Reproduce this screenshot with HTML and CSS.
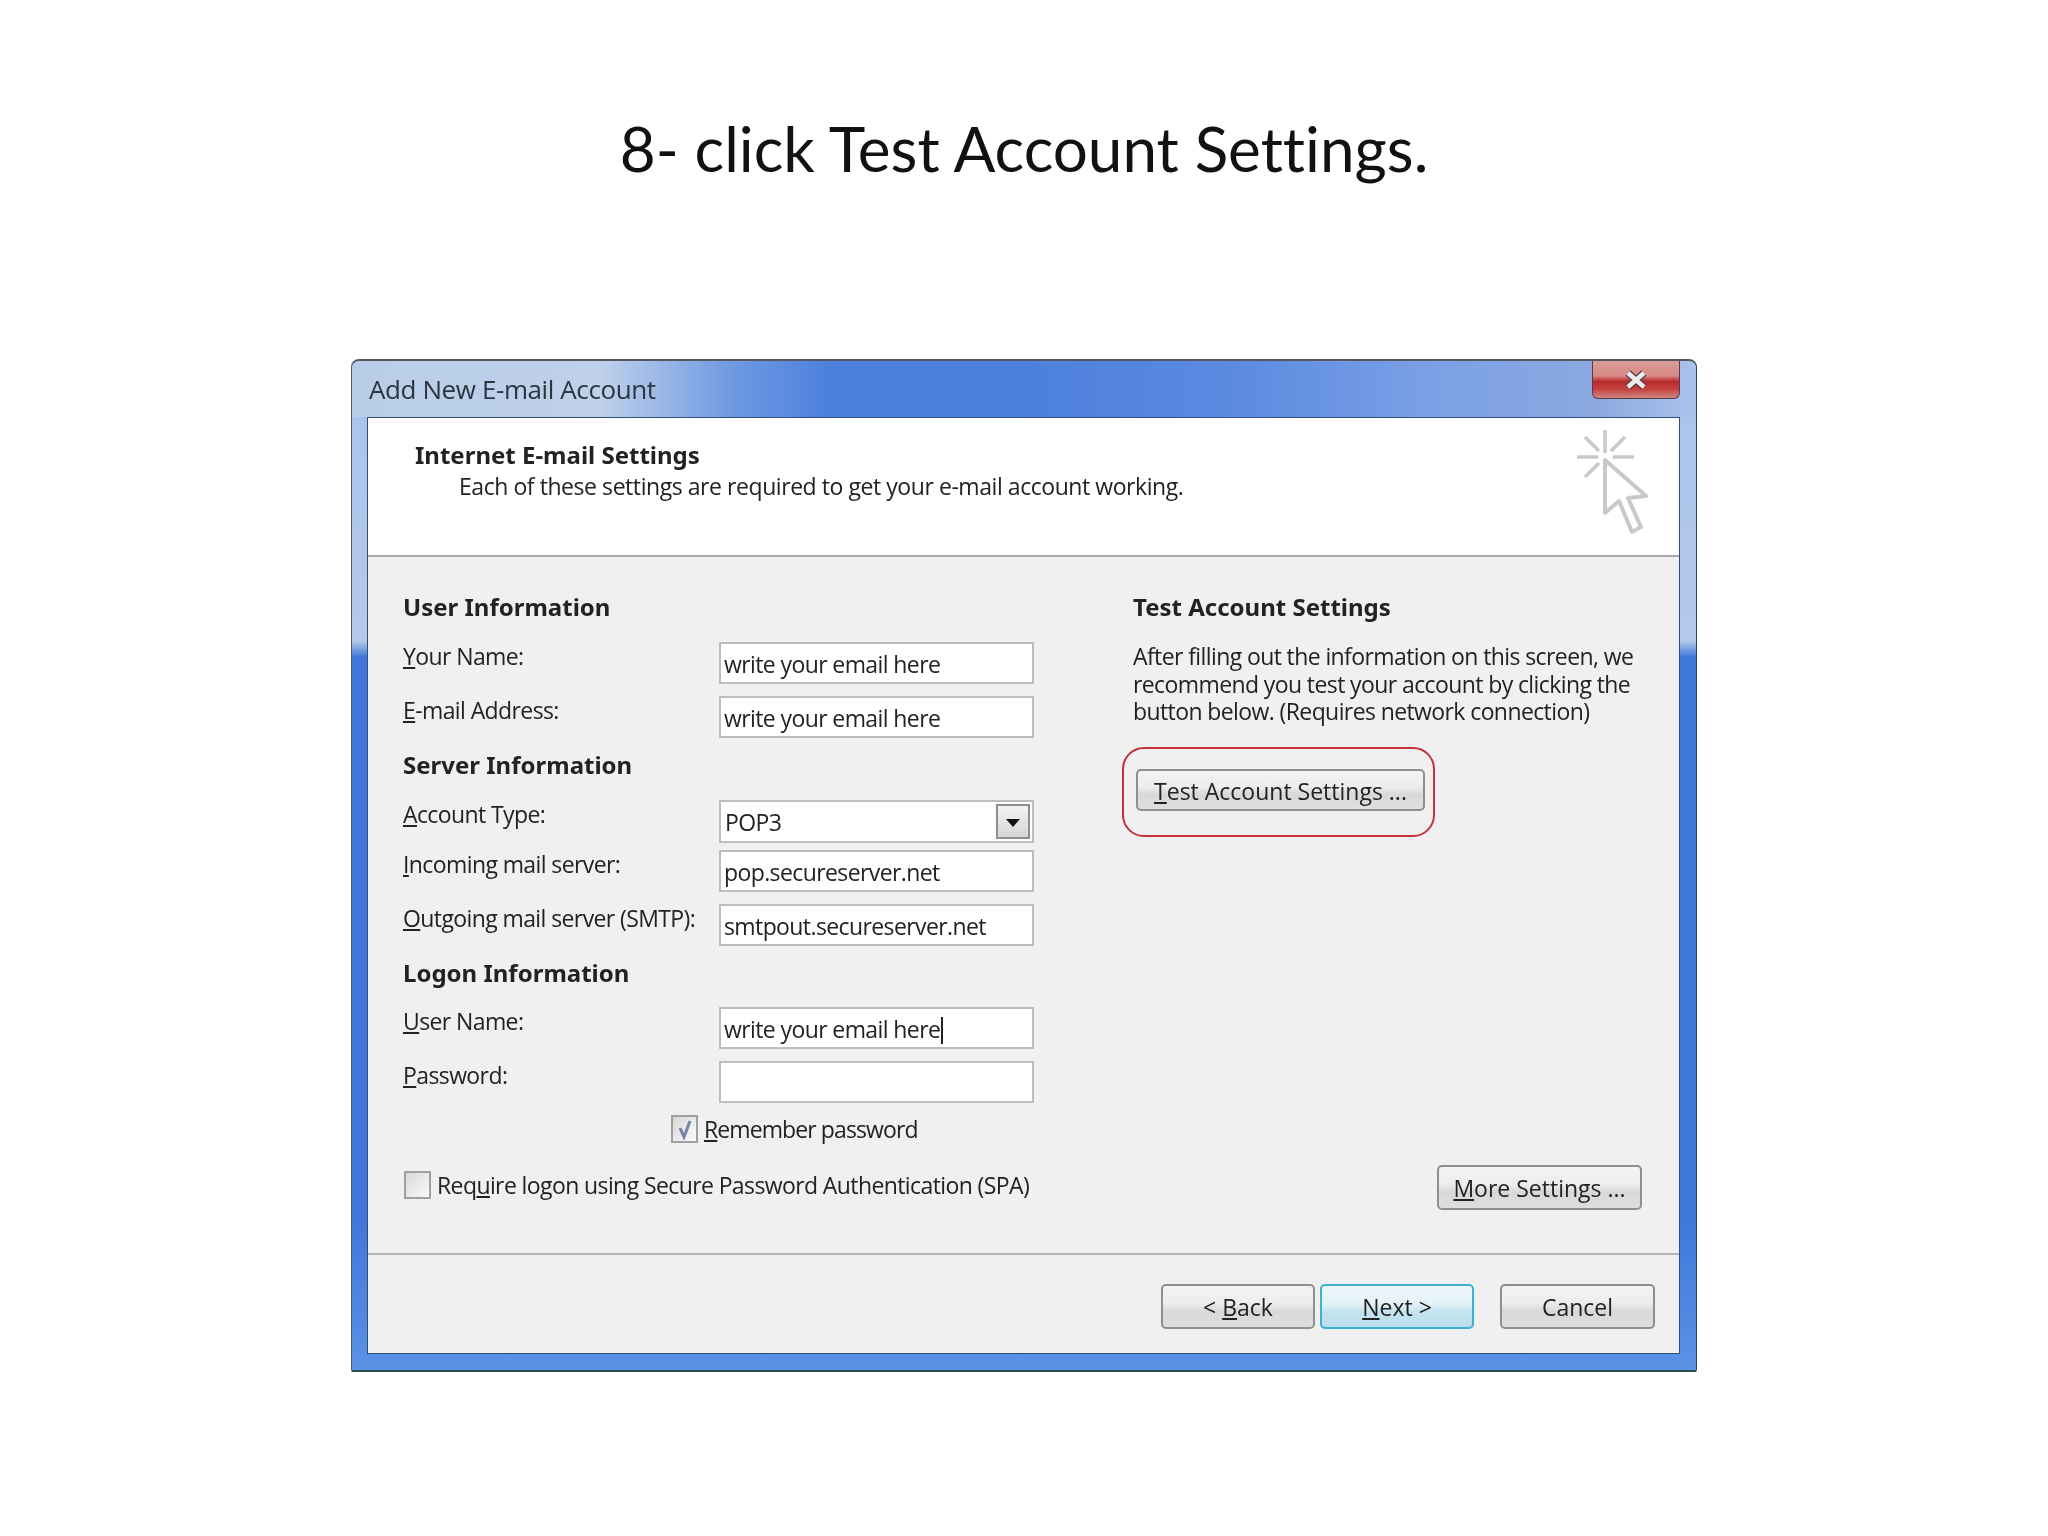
FILE: index.html
```html
<!DOCTYPE html>
<html lang="en">
<head>
    <meta charset="UTF-8">
    <title>Test Account Settings</title>
    <link rel="stylesheet" href="styles.css">
</head>
<body>
    <h1 class="slide-title">8- click Test Account Settings.</h1>

    <div class="window">
        <div class="title-bar">
            <span class="window-name">Add New E-mail Account</span>
            <div class="close-button">
                <svg width="26" height="22" viewBox="0 0 26 22">
                    <path d="M5 4 L21 18 M21 4 L5 18" stroke="#5a4048" stroke-width="7.5" fill="none"/>
                    <path d="M5 4 L21 18 M21 4 L5 18" stroke="#ececec" stroke-width="4.5" fill="none"/>
                </svg>
            </div>
        </div>

        <div class="panel">
            <!-- white header -->
            <div class="panel-header">
                <div class="header-title">Internet E-mail Settings</div>
                <div class="header-text">Each of these settings are required to get your e-mail account working.</div>
                <svg class="cursor-icon" width="80" height="112" viewBox="0 0 80 112">
                    <g stroke="#c9c9c9" stroke-width="3.5" fill="none">
                        <path d="M36 5 V28 M8 32 H29 M44 32 H65 M16 12 L30 26 M56 12 L42 26 M16 52 L30 38"/>
                        <path stroke-width="4" stroke-linejoin="round" d="M36 35 V88 L50 76 L63 107 L72 102 L59 73 L77 71 Z"/>
                    </g>
                </svg>
            </div>

            <!-- form -->
            <div class="panel-body">
                <div class="col-left">
                    <div class="section-title">User Information</div>
                    <div class="form-row row-first">
                        <label class="field-label"><u>Y</u>our Name:</label>
                        <div class="input-box">write your email here</div>
                    </div>
                    <div class="form-row row-next">
                        <label class="field-label"><u>E</u>-mail Address:</label>
                        <div class="input-box">write your email here</div>
                    </div>

                    <div class="section-title section-gap">Server Information</div>
                    <div class="form-row row-first">
                        <label class="field-label"><u>A</u>ccount Type:</label>
                        <div class="input-box select-box">POP3
                            <span class="select-arrow"></span>
                        </div>
                    </div>
                    <div class="form-row row-tight">
                        <label class="field-label"><u>I</u>ncoming mail server:</label>
                        <div class="input-box">pop.secureserver.net</div>
                    </div>
                    <div class="form-row row-next">
                        <label class="field-label"><u>O</u>utgoing mail server (SMTP):</label>
                        <div class="input-box">smtpout.secureserver.net</div>
                    </div>

                    <div class="section-title section-gap">Logon Information</div>
                    <div class="form-row row-logon">
                        <label class="field-label"><u>U</u>ser Name:</label>
                        <div class="input-box">write your email here<span class="caret"></span></div>
                    </div>
                    <div class="form-row row-next">
                        <label class="field-label"><u>P</u>assword:</label>
                        <div class="input-box"></div>
                    </div>

                    <div class="check-row remember-row">
                        <span class="check-box">
                            <svg width="18" height="22" viewBox="0 0 18 22">
                                <path d="M4 10 L8 19 L14 3" stroke="#7484a6" stroke-width="3" fill="none"/>
                            </svg>
                        </span>
                        <span><u>R</u>emember password</span>
                    </div>
                    <div class="check-row require-row">
                        <span class="check-box"></span>
                        <span>Req<u>u</u>ire logon using Secure Password Authentication (SPA)</span>
                    </div>
                </div>

                <div class="col-right">
                    <div class="section-title">Test Account Settings</div>
                    <p class="test-text">After filling out the information on this screen, we<br>recommend you test your account by clicking the<br>button below. (Requires network connection)</p>
                    <div class="red-outline">
                        <div class="btn btn-test"><u>T</u>est Account Settings ...</div>
                    </div>
                    <div class="btn btn-more"><u>M</u>ore Settings ...</div>
                </div>
            </div>

            <!-- wizard buttons -->
            <div class="panel-footer">
                <div class="btn btn-wizard">&lt; <u>B</u>ack</div>
                <div class="btn btn-wizard btn-default"><u>N</u>ext &gt;</div>
                <div class="btn btn-wizard btn-cancel">Cancel</div>
            </div>
        </div>
    </div>
</body>
</html>
```

FILE: styles.css
```css
body {
    margin: 0;
    background-color: #fff;
    font-family: "Open Sans", "Noto Sans", sans-serif;
    color: #222;
}

.slide-title {
    margin: 98px 0 0 0;
    height: 100px;
    line-height: 100px;
    text-align: center;
    font-family: "Lato", sans-serif;
    font-size: 62px;
    font-weight: 400;
    font-variant-ligatures: none;
    color: #111;
}

/* window frame ==================================================== */

.window {
    box-sizing: border-box;
    width: 1346px;
    height: 1013px;
    margin: 161px auto 0 auto;
    padding: 0 16px 19px 15px;
    border-top: 2px solid #55595f;
    border-left: 1px solid #4a5a70;
    border-right: 1px solid #274b5c;
    border-bottom: 2px solid #2c4a50;
    border-radius: 8px 8px 2px 2px;
    background: linear-gradient(to bottom, #a9c3ec 0, #b4c9ea 280px, #3f78da 296px, #3f78da 860px, #5c93e6 1013px);
    filter: blur(0.7px);
    font-size: 23px;
    letter-spacing: -0.6px;
}

.title-bar {
    display: flex;
    justify-content: space-between;
    height: 56px;
    margin: 0 -16px 0 -15px;
    padding: 0 16px 0 17px;
    border-radius: 8px 8px 0 0;
    background: linear-gradient(to right, #b9cde9 0, #bed0ea 250px, #6f99e2 380px, #4c80dd 480px, #4c80dd 660px, #5b8ae0 880px, #7ba0e6 1080px, #8ba9e0 1240px, #a9c3ec 1346px);
}

.window-name {
    line-height: 56px;
    font-size: 26px;
    color: #2c3440;
    letter-spacing: -0.4px;
}

.close-button {
    box-sizing: border-box;
    width: 88px;
    height: 38px;
    display: flex;
    align-items: center;
    justify-content: center;
    border: 1px solid #5a3a48;
    border-top: none;
    border-radius: 0 0 6px 6px;
    background: linear-gradient(to bottom, #d89c98 0, #d98a86 40%, #b92a2c 55%, #c4403e 75%, #cf8580 100%);
}

/* inner panel ===================================================== */

.panel {
    border: 1px solid #2f4f78;
    background-color: #f0f0f0;
}

.panel-header {
    position: relative;
    box-sizing: border-box;
    height: 139px;
    padding: 21px 0 0 47px;
    background-color: #fff;
    border-bottom: 2px solid #a8a8a8;
}

.header-title {
    font-weight: 700;
    line-height: 32px;
    font-family: "Noto Sans", sans-serif;
    font-size: 24px;
    letter-spacing: 0;
}

.header-text {
    margin-left: 44px;
    line-height: 30px;
    letter-spacing: -0.44px;
}

.cursor-icon {
    position: absolute;
    top: 7px;
    right: 30px;
}

.panel-body {
    box-sizing: border-box;
    display: flex;
    height: 698px;
    padding: 35px 37px 43px 35px;
    border-bottom: 2px solid #b4b4b4;
}

.panel-footer {
    display: flex;
    justify-content: flex-end;
    padding: 29px 24px 0 0;
    height: 69px;
}

/* left column ===================================================== */

.col-left {
    width: 730px;
    flex-shrink: 0;
}

.section-title {
    height: 30px;
    line-height: 30px;
    font-weight: 700;
    font-family: "Noto Sans", sans-serif;
    font-size: 24px;
    letter-spacing: 0;
}

.section-gap {
    margin-top: 12px;
}

.form-row {
    display: flex;
    width: 632px;
}

.row-first {
    margin-top: 20px;
}

.row-next {
    margin-top: 12px;
}

.row-tight {
    margin-top: 7px;
}

.row-logon {
    margin-top: 19px;
}

.field-label {
    width: 316px;
    flex-shrink: 0;
    line-height: 28px;
}

.input-box {
    position: relative;
    box-sizing: border-box;
    width: 315px;
    height: 42px;
    padding: 0 0 0 3px;
    line-height: 41px;
    background-color: #fff;
    border: 2px solid #bdbdbd;
}

.select-box {
    height: 43px;
    padding-left: 4px;
}

.select-arrow {
    position: absolute;
    top: 2px;
    right: 2px;
    box-sizing: border-box;
    width: 34px;
    height: 35px;
    border: 2px solid #8e8e8e;
    background: linear-gradient(to bottom, #f4f4f4, #d6d6d6);
}

.select-arrow::after {
    content: "";
    position: absolute;
    top: 13px;
    left: 8px;
    border-top: 8px solid #111;
    border-left: 7px solid transparent;
    border-right: 7px solid transparent;
}

.caret {
    display: inline-block;
    width: 2px;
    height: 27px;
    margin-left: 1px;
    vertical-align: -6px;
    background-color: #222;
}

.check-row {
    display: flex;
    align-items: center;
    gap: 6px;
    height: 28px;
}

.remember-row {
    margin-top: 12px;
    padding-left: 268px;
    letter-spacing: -0.9px;
}

.require-row {
    margin-top: 28px;
    padding-left: 1px;
}

.check-box {
    box-sizing: border-box;
    display: flex;
    align-items: center;
    justify-content: center;
    width: 27px;
    height: 28px;
    border: 2px solid #a0a0a0;
    background: linear-gradient(135deg, #d8d8d8, #fafafa);
}

/* right column ==================================================== */

.col-right {
    flex: 1;
    display: flex;
    flex-direction: column;
    align-items: flex-start;
}

.test-text {
    margin: 21px 0 0 0;
    line-height: 27.5px;
    white-space: nowrap;
}

.red-outline {
    box-sizing: border-box;
    width: 313px;
    height: 90px;
    margin: 21px 0 0 -11px;
    padding: 20px 0 0 12px;
    border: 2px solid #c5303c;
    border-radius: 22px;
}

/* buttons ========================================================= */

.btn {
    box-sizing: border-box;
    height: 45px;
    line-height: 43px;
    text-align: center;
    white-space: nowrap;
    letter-spacing: 0;
    border: 2px solid #8f8f8f;
    border-radius: 5px;
    background: linear-gradient(to bottom, #f3f3f3 0, #ededed 42%, #d8d8d8 62%, #dedede 100%);
}

.btn-test {
    width: 289px;
    height: 42px;
    line-height: 40px;
}

.btn-more {
    width: 205px;
    margin-top: auto;
    align-self: flex-end;
}

.btn-wizard {
    width: 154px;
    margin-right: 5px;
}

.btn-default {
    margin-right: 26px;
    border-color: #3fb0d0;
    background: linear-gradient(to bottom, #eef7fb 0, #e4f2f8 42%, #c6e4f0 62%, #b9deec 100%);
}

.btn-cancel {
    width: 155px;
    margin-right: 0;
}
```
